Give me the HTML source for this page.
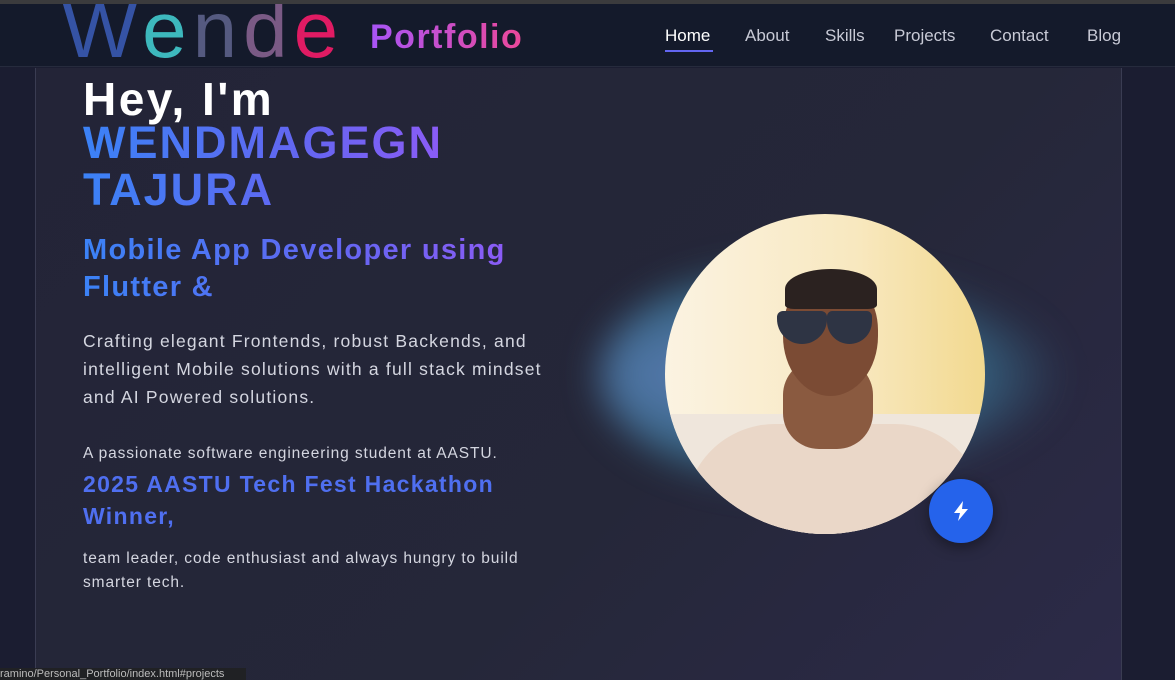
<!DOCTYPE html>
<html><head><meta charset="utf-8"><style>
*{margin:0;padding:0;box-sizing:border-box}
body{width:1175px;height:680px;overflow:hidden;background:#1b1d31;font-family:"Liberation Sans",sans-serif;position:relative}
.top{position:absolute;left:0;top:0;width:1175px;height:4px;background:#3b3b3d}
.nav{position:absolute;left:0;top:4px;width:1175px;height:63px;background:#141a2b;border-bottom:1px solid #262b3d;overflow:hidden}
.logo{position:absolute;left:62px;top:-14px;font-size:80px;letter-spacing:6px;line-height:1}
.pf{position:absolute;left:370px;top:14px;font-size:34px;letter-spacing:1.5px;font-weight:bold;background:linear-gradient(90deg,#a855f7,#ec4899);-webkit-background-clip:text;color:transparent}
.menu{position:absolute;top:22px;font-size:17px;color:#c8cad6}
.panel{position:absolute;left:35px;top:68px;width:1087px;height:612px;background:linear-gradient(135deg,#232437 0%,#252739 60%,#2c2a48 100%);border-left:1px solid #3a3c52;border-right:1px solid #3a3c52}
.t{position:absolute;left:83px;font-weight:bold}
.g{background:linear-gradient(90deg,#3b82f6,#6366f1 60%,#8b5cf6);-webkit-background-clip:text;color:transparent}
.p{position:absolute;left:83px;color:#d4d6e0;font-size:17.5px;line-height:28px;letter-spacing:1.2px}
.glow{position:absolute;left:600px;top:260px;width:460px;height:230px;border-radius:50%;background:radial-gradient(ellipse at 30% 50%,rgba(110,150,220,.8),rgba(70,160,200,.5) 50%,rgba(40,50,80,0) 72%);filter:blur(18px)}
.ph{position:absolute;left:665px;top:214px;width:320px;height:320px;border-radius:50%;overflow:hidden;background:linear-gradient(90deg,#fbf3e2 0%,#f8e8bf 60%,#f2d98f 100%)}
.btn{position:absolute;left:929px;top:479px;width:64px;height:64px;border-radius:50%;background:#2563eb;box-shadow:0 4px 14px rgba(0,0,0,.4)}
.status{position:absolute;left:0;top:668px;width:246px;height:12px;background:#202124;color:#bbb;font-size:11px;line-height:12px;white-space:nowrap;overflow:hidden}
</style></head><body>
<div class="top"></div>
<div class="panel"></div>
<div class="nav">
<div class="logo"><span style="color:#3553a5">W</span><span style="color:#3db8bd">e</span><span style="color:#555a80">n</span><span style="color:#7a5a85">d</span><span style="color:#e01b63">e</span></div>
<div class="pf">Portfolio</div>
<div class="menu" style="left:665px;color:#fff">Home<div style="height:2px;background:#6366f1;margin-top:4px;width:48px"></div></div>
<div class="menu" style="left:745px">About</div>
<div class="menu" style="left:825px">Skills</div>
<div class="menu" style="left:894px">Projects</div>
<div class="menu" style="left:990px">Contact</div>
<div class="menu" style="left:1087px">Blog</div>
</div>
<div class="t" style="top:72px;font-size:46px;color:#fff;letter-spacing:2.5px">Hey, I'm</div>
<div class="t g" style="top:119px;font-size:45px;line-height:47px;letter-spacing:2px">WENDMAGEGN<br>TAJURA</div>
<div class="t g" style="top:232px;font-size:29px;line-height:37px;letter-spacing:1.3px">Mobile App Developer using<br>Flutter &amp;</div>
<div class="p" style="top:327px">Crafting elegant Frontends, robust Backends, and<br>intelligent Mobile solutions with a full stack mindset<br>and AI Powered solutions.</div>
<div class="p" style="top:444px;font-size:15.5px;line-height:20px;letter-spacing:.9px">A passionate software engineering student at AASTU.</div>
<div class="t" style="top:468px;font-size:23px;line-height:32px;color:#4f6ff0;letter-spacing:1.3px">2025 AASTU Tech Fest Hackathon<br>Winner,</div>
<div class="p" style="top:547px;font-size:15.5px;line-height:24px;letter-spacing:.9px">team leader, code enthusiast and always hungry to build<br>smarter tech.</div>
<div class="glow"></div>
<div class="ph">
<div style="position:absolute;left:0;top:200px;width:320px;height:130px;background:#efe6dc"></div>
<div style="position:absolute;left:20px;top:210px;width:300px;height:120px;border-radius:90px 90px 0 0;background:#ead7c8"></div>
<div style="position:absolute;left:118px;top:145px;width:90px;height:90px;background:#8a5a40;border-radius:40%"></div>
<div style="position:absolute;left:118px;top:62px;width:95px;height:120px;border-radius:45% 45% 50% 50%;background:#7b4b34"></div>
<div style="position:absolute;left:120px;top:55px;width:92px;height:40px;border-radius:50% 50% 10% 10%;background:#2b2220"></div>
<div style="position:absolute;left:112px;top:97px;width:50px;height:33px;border-radius:6px 6px 25px 25px;background:#2e3444"></div>
<div style="position:absolute;left:162px;top:97px;width:45px;height:33px;border-radius:6px 6px 25px 25px;background:#2e3444"></div>
</div>
<div class="btn"><svg width="64" height="64" viewBox="0 0 64 64"><path d="M34 22 L25 34 H31 L29 42 L39 30 H33 Z" fill="#fff"/></svg></div>
<div class="status">ramino/Personal_Portfolio/index.html#projects</div>
</body></html>
